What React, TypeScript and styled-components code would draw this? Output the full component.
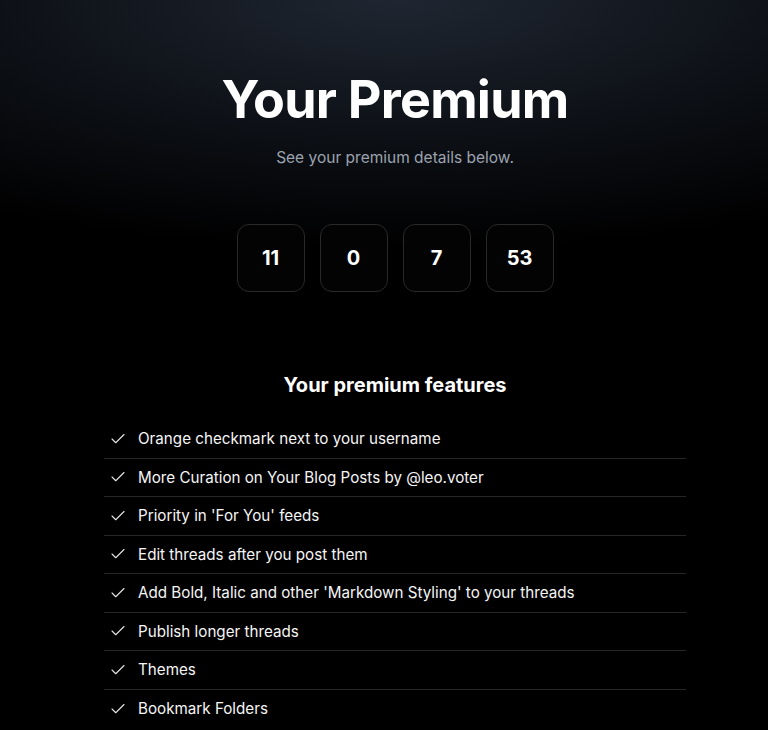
import React from 'react';
import styled, { createGlobalStyle } from 'styled-components';
import { Check } from 'lucide-react';

const GlobalStyle = createGlobalStyle`
  html, body {
    margin: 0;
    padding: 0;
    background: #000;
  }
  body {
    font-family: Inter, "Noto Sans", "Liberation Sans", sans-serif;
    color: #fafafa;
  }
  * {
    box-sizing: border-box;
  }
`;

const Page = styled.div`
  min-height: 730px;
  padding: 74px 0 40px 22px;
  background: radial-gradient(ellipse 760px 250px at 52% 0%, #1f2631 0%, #0b0e13 60%, #000 100%);
  display: flex;
  flex-direction: column;
  align-items: center;
`;

const Title = styled.h1`
  margin: 0;
  font-size: 52px;
  line-height: 52px;
  font-weight: 700;
  letter-spacing: -0.75px;
  color: #fff;
`;

const Subtitle = styled.p`
  margin: 20px 0 0;
  font-size: 15.5px;
  line-height: 24px;
  color: #9ca3af;
`;

const Countdown = styled.div`
  display: flex;
  gap: 15px;
  margin-top: 54px;
`;

const TimeBox = styled.div`
  width: 68px;
  height: 68px;
  border: 1px solid #292929;
  border-radius: 12px;
  background: #030303;
  display: flex;
  align-items: center;
  justify-content: center;
  font-size: 20px;
  font-weight: 700;
  color: #fff;
`;

const SectionTitle = styled.h2`
  margin: 79px 0 0;
  font-size: 20px;
  line-height: 28px;
  font-weight: 700;
  color: #fff;
`;

const FeatureList = styled.ul`
  list-style: none;
  margin: 21px 0 0;
  padding: 0;
  width: 582px;
`;

const FeatureItem = styled.li<{ $last?: boolean }>`
  display: flex;
  align-items: center;
  gap: 11px;
  height: 38.5px;
  padding-left: 5px;
  font-size: 15.2px;
  color: #f5f5f5;
  border-bottom: ${p => (p.$last ? 'none' : '1px solid #262626')};

  svg {
    flex-shrink: 0;
    color: #e5e5e5;
  }
`;

const features = [
  'Orange checkmark next to your username',
  'More Curation on Your Blog Posts by @leo.voter',
  "Priority in 'For You' feeds",
  'Edit threads after you post them',
  "Add Bold, Italic and other 'Markdown Styling' to your threads",
  'Publish longer threads',
  'Themes',
  'Bookmark Folders',
];

const countdown = [11, 0, 7, 53];

const App: React.FC = () => {
  return (
    <>
      <GlobalStyle />
      <Page>
        <Title>Your Premium</Title>
        <Subtitle>See your premium details below.</Subtitle>
        <Countdown>
          {countdown.map((n, i) => (
            <TimeBox key={i}>{n}</TimeBox>
          ))}
        </Countdown>
        <SectionTitle>Your premium features</SectionTitle>
        <FeatureList>
          {features.map((f, i) => (
            <FeatureItem key={f} $last={i === features.length - 1}>
              <Check size={18} strokeWidth={1.5} />
              {f}
            </FeatureItem>
          ))}
        </FeatureList>
      </Page>
    </>
  );
};

export default App;
